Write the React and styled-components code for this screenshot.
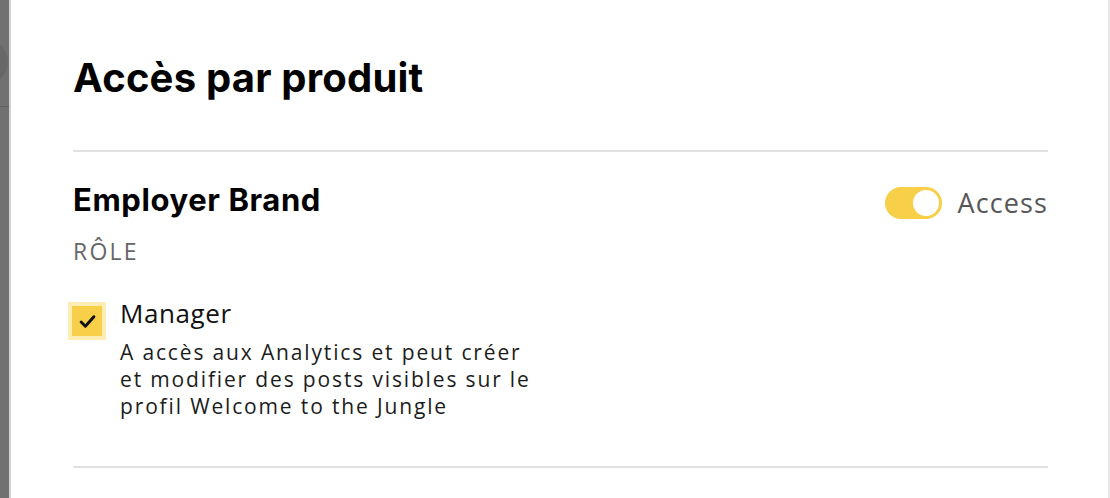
import styled, { createGlobalStyle } from "styled-components";

const GlobalStyle = createGlobalStyle`
  html, body {
    margin: 0;
    padding: 0;
    background: #ffffff;
  }
  body {
    font-family: "Open Sans", "Liberation Sans", sans-serif;
    color: #1a1a1a;
  }
`;

const Screen = styled.div`
  display: flex;
  width: 1110px;
  height: 498px;
  overflow: hidden;
`;

// the dimmed page behind the side panel
const Backdrop = styled.div`
  position: relative;
  width: 9px;
  flex-shrink: 0;
  background: #717171;
  border-right: 2px solid #d2d2d2;
  overflow: hidden;
`;

const BackdropAvatar = styled.div`
  position: absolute;
  left: -38px;
  top: 39px;
  width: 46px;
  height: 46px;
  border-radius: 50%;
  background: #686868;
`;

const BackdropRule = styled.div`
  position: absolute;
  left: 0;
  right: 0;
  top: 106px;
  height: 1px;
  background: #5e5e5e;
`;

const Panel = styled.div`
  flex: 1;
  display: flex;
  flex-direction: column;
  padding: 54px 60px 0 62px;
  background: #ffffff;
  border-right: 2px solid #e6e6e6;
`;

const Title = styled.h1`
  margin: 0;
  font-family: "Inter", "Liberation Sans", sans-serif;
  font-weight: 700;
  font-size: 40px;
  line-height: 48px;
  letter-spacing: 0.2px;
  color: #000;
`;

const Divider = styled.hr`
  margin: ${(p) => p.$top || 0}px 0 0;
  border: 0;
  height: 2px;
  background: #e1e1e1;
`;

const Product = styled.section`
  display: flex;
  flex-direction: column;
  padding-top: 30px;
`;

const ProductHead = styled.div`
  display: flex;
  justify-content: space-between;
  align-items: flex-start;
`;

const ProductName = styled.h2`
  margin: 0;
  font-family: "Inter", "Liberation Sans", sans-serif;
  font-weight: 700;
  font-size: 31px;
  line-height: 36px;
  letter-spacing: 0.6px;
  color: #000;
`;

const AccessToggle = styled.label`
  display: flex;
  align-items: center;
  gap: 16px;
  margin-top: 5px;
  font-size: 27px;
  line-height: 32px;
  color: #575757;
  letter-spacing: 1.1px;
`;

const Track = styled.span`
  display: flex;
  align-items: center;
  justify-content: ${(p) => (p.$on ? "flex-end" : "flex-start")};
  width: 57px;
  height: 32px;
  padding: 3px;
  box-sizing: border-box;
  border-radius: 16px;
  background: ${(p) => (p.$on ? "#f8cf48" : "#d6d6d6")};
`;

const Knob = styled.span`
  width: 26px;
  height: 26px;
  border-radius: 50%;
  background: #fff;
`;

const SectionLabel = styled.div`
  margin-top: 18px;
  font-size: 23px;
  line-height: 28px;
  letter-spacing: 2.2px;
  color: #666;
`;

const RoleOption = styled.div`
  display: flex;
  align-items: flex-start;
  gap: 18px;
  margin-top: 32px;
`;

const Checkbox = styled.span`
  display: flex;
  align-items: center;
  justify-content: center;
  flex-shrink: 0;
  width: 30px;
  height: 30px;
  margin-top: 9px;
  margin-left: -1px;
  background: #f8cf48;
  box-shadow: 0 0 0 4px #fdedb3;
`;

const RoleText = styled.div`
  display: flex;
  flex-direction: column;
`;

const RoleName = styled.div`
  font-size: 26px;
  line-height: 32px;
  color: #111;
  letter-spacing: 0.6px;
`;

const RoleDesc = styled.p`
  margin: 10px 0 0;
  width: 420px;
  font-size: 21px;
  line-height: 27px;
  color: #1c1c1c;
  letter-spacing: 1.85px;
`;

const CheckIcon = () => (
  <svg width="17" height="15" viewBox="0 0 16 14" fill="none">
    <path
      d="M2 7.5 L6 11.5 L14 2.5"
      stroke="#111"
      strokeWidth="2.8"
      strokeLinecap="round"
      strokeLinejoin="round"
    />
  </svg>
);

const App = () => {
  return (
    <>
      <GlobalStyle />
      <Screen>
        <Backdrop>
          <BackdropAvatar />
          <BackdropRule />
        </Backdrop>
        <Panel>
          <Title>Accès par produit</Title>
          <Divider $top={48} />
          <Product>
            <ProductHead>
              <ProductName>Employer Brand</ProductName>
              <AccessToggle>
                <Track $on>
                  <Knob />
                </Track>
                Access
              </AccessToggle>
            </ProductHead>
            <SectionLabel>RÔLE</SectionLabel>
            <RoleOption>
              <Checkbox>
                <CheckIcon />
              </Checkbox>
              <RoleText>
                <RoleName>Manager</RoleName>
                <RoleDesc>
                  A accès aux Analytics et peut créer et modifier des posts
                  visibles sur le profil Welcome to the Jungle
                </RoleDesc>
              </RoleText>
            </RoleOption>
          </Product>
          <Divider $top={46} />
        </Panel>
      </Screen>
    </>
  );
};

export default App;
